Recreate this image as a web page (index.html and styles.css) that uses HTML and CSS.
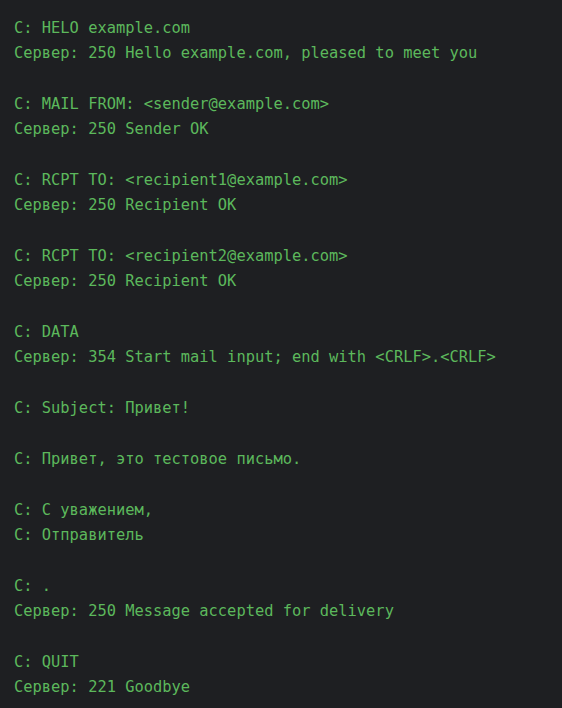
FILE: index.html
```html
<!DOCTYPE html>
<html lang="ru">
<head>
<meta charset="utf-8">
<link rel="stylesheet" href="styles.css">
</head>
<body>
<pre class="code">C: HELO example.com
Сервер: 250 Hello example.com, pleased to meet you

C: MAIL FROM: &lt;sender@example.com&gt;
Сервер: 250 Sender OK

C: RCPT TO: &lt;recipient1@example.com&gt;
Сервер: 250 Recipient OK

C: RCPT TO: &lt;recipient2@example.com&gt;
Сервер: 250 Recipient OK

C: DATA
Сервер: 354 Start mail input; end with &lt;CRLF&gt;.&lt;CRLF&gt;

C: Subject: Привет!

C: Привет, это тестовое письмо.

C: С уважением,
C: Отправитель

C: .
Сервер: 250 Message accepted for delivery

C: QUIT
Сервер: 221 Goodbye</pre>
</body>
</html>
```
FILE: styles.css
```css
html, body {
  margin: 0;
  padding: 0;
  background: #1e1f22;
  height: 100%;
}
.code {
  margin: 0;
  padding: 16px 14px 0 14px;
  font-family: "DejaVu Sans Mono", "Liberation Mono", monospace;
  font-size: 15.4px;
  line-height: 25.35px;
  color: #5cb85c;
  background: #1e1f22;
  white-space: pre;
}
```
